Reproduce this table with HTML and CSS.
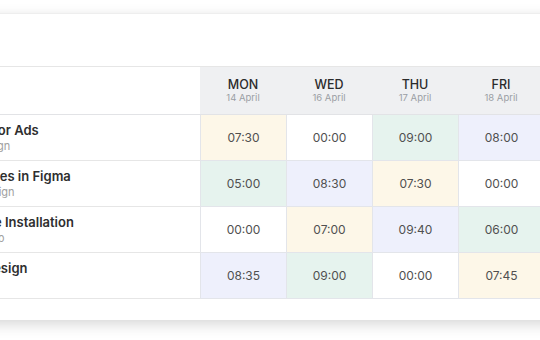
FILE: index.html
```html
<!DOCTYPE html>
<html>
<head>
<meta charset="utf-8">
<link rel="stylesheet" href="styles.css">
</head>
<body>
<div class="card">
  <div class="grid">
    <div class="hcell first"></div>
    <div class="hcell day"><span class="dname">MON</span><span class="ddate">14 April</span></div>
    <div class="hcell day"><span class="dname">WED</span><span class="ddate">16 April</span></div>
    <div class="hcell day"><span class="dname">THU</span><span class="ddate">17 April</span></div>
    <div class="hcell day"><span class="dname">FRI</span><span class="ddate">18 April</span></div>
    <div class="hcell day"><span class="dname">SAT</span><span class="ddate">19 April</span></div>

    <div class="task"><span class="title">Banner for Ads</span><span class="sub">Logo Design</span></div>
    <div class="cell yellow">07:30</div>
    <div class="cell">00:00</div>
    <div class="cell green">09:00</div>
    <div class="cell purple">08:00</div>
    <div class="cell">00:00</div>

    <div class="task"><span class="title">Icon Styles in Figma</span><span class="sub">Game Design</span></div>
    <div class="cell green">05:00</div>
    <div class="cell purple">08:30</div>
    <div class="cell yellow">07:30</div>
    <div class="cell">00:00</div>
    <div class="cell">00:00</div>

    <div class="task"><span class="title">Software Installation</span><span class="sub">Desk Setup</span></div>
    <div class="cell">00:00</div>
    <div class="cell yellow">07:00</div>
    <div class="cell purple">09:40</div>
    <div class="cell green">06:00</div>
    <div class="cell">00:00</div>

    <div class="task"><span class="title">Event Design</span></div>
    <div class="cell purple">08:35</div>
    <div class="cell green">09:00</div>
    <div class="cell">00:00</div>
    <div class="cell yellow">07:45</div>
    <div class="cell">00:00</div>
  </div>
</div>
</body>
</html>
```
FILE: styles.css
```css
html, body {
  margin: 0;
  padding: 0;
  background: #ffffff;
  overflow: hidden;
  width: 540px;
  height: 340px;
}
body {
  font-family: Inter, "Noto Sans", sans-serif;
  color: #333;
}
.card {
  margin-top: 13px;
  margin-left: -100px;
  width: 820px;
  height: 307px;
  box-sizing: border-box;
  background: #fff;
  border-top: 1px solid #eeeeee;
  box-shadow: 0 0 12px rgba(0, 0, 0, 0.06), 0 7px 12px rgba(0, 0, 0, 0.1);
  padding-top: 52px;
}
.grid {
  display: grid;
  grid-template-columns: 300px repeat(5, 86px);
  grid-auto-rows: 46px;
  grid-template-rows: 48px;
  border-top: 1px solid #e6e6e6;
}
.hcell {
  display: flex;
  flex-direction: column;
  align-items: center;
  justify-content: center;
  border-bottom: 1px solid #e2e3e6;
}
.hcell.day {
  background: #eff0f2;
}
.dname {
  font-size: 12.5px;
  font-weight: 500;
  color: #2b2b2b;
  line-height: 14px;
}
.ddate {
  font-size: 9.5px;
  color: #9a9ea4;
  line-height: 12px;
}
.task {
  display: flex;
  flex-direction: column;
  padding: 7px 0 0 45px;
  border-bottom: 1px solid #e6e6e6;
}
.title {
  font-size: 13px;
  font-weight: 600;
  color: #2e2e2e;
  line-height: 16px;
}
.sub {
  font-size: 11px;
  color: #a0a0a0;
  line-height: 16px;
}
.cell {
  display: flex;
  align-items: center;
  justify-content: center;
  font-size: 12px;
  color: #505050;
  border-left: 1px solid #e3e5ea;
  border-bottom: 1px solid #e3e5ea;
  background: #fff;
}
.yellow { background: #fdf7e8; }
.green { background: #e6f3ee; }
.purple { background: #eef0fc; }
```
